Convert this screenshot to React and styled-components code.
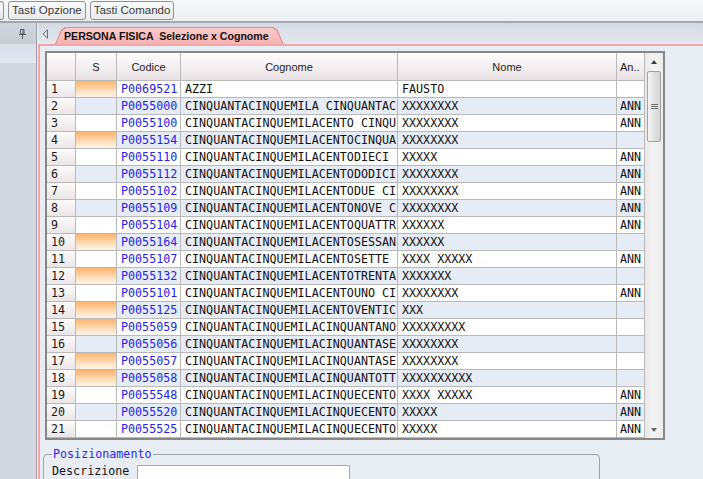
import React from 'react';
import styled, { createGlobalStyle } from 'styled-components';

const GlobalStyle = createGlobalStyle`
  html, body {
    margin: 0;
    padding: 0;
    width: 703px;
    height: 479px;
    overflow: hidden;
    background: #e8edf4;
  }
  body {
    font-family: "Liberation Sans", Arial, sans-serif;
  }
`;

const mono = `"DejaVu Sans Mono", "Liberation Mono", monospace`;

const Screen = styled.div`
  display: flex;
  flex-direction: column;
  width: 703px;
  height: 479px;
  overflow: hidden;
`;

const Toolbar = styled.div`
  flex: none;
  height: 20px;
  padding-top: 1px;
  display: flex;
  align-items: flex-start;
  gap: 4px;
  background: linear-gradient(#f8f9fb, #eceef2);
  border-bottom: 2px solid #a3a6ab;
`;

const ToolButton = styled.button`
  height: 19px;
  padding: 0 3px;
  border: 1px solid #8f9195;
  border-radius: 3px;
  background: linear-gradient(#fbfbfb, #e8e9eb);
  font-family: "Liberation Sans", Arial, sans-serif;
  font-size: 11.5px;
  color: #3a3a3a;
  line-height: 17px;
  white-space: nowrap;
`;

const ButtonStub = styled(ToolButton)`
  width: 4px;
  padding: 0;
  border-left: none;
  border-radius: 0 3px 3px 0;
`;

const Workspace = styled.div`
  flex: 1;
  display: flex;
  min-height: 0;
`;

const SidePanel = styled.div`
  flex: none;
  width: 36px;
  display: flex;
  flex-direction: column;
  background: #d3d7df;
  border-right: 1px solid #989ca4;
`;

const SideHeader = styled.div`
  height: 21px;
  display: flex;
  align-items: center;
  justify-content: flex-end;
  padding-right: 10px;
  background: linear-gradient(#d0d4dc, #c9ced6);
  border-bottom: 3px solid #dde0e6;
`;

const SideStrip = styled.div`
  height: 16px;
  background: linear-gradient(#d8e0eb, #e3e8f0);
`;

const Main = styled.div`
  flex: 1;
  min-width: 0;
  display: flex;
  flex-direction: column;
  border-left: 1px solid #eef0f4;
`;

const TabBar = styled.div`
  flex: none;
  height: 21px;
  display: flex;
  align-items: flex-end;
  padding-left: 4px;
  background: linear-gradient(#d5dae2, #e4e8ee);
`;

const TabArrow = styled.svg`
  align-self: center;
  margin: 1px 6px 0 0;
`;

const tabShape = `polygon(0 100%, 6px 3px, 10px 0, calc(100% - 10px) 0, calc(100% - 6px) 3px, 100% 100%)`;

const TabEdge = styled.div`
  padding: 1px 1px 0 1px;
  background: #dc8e8e;
  clip-path: ${tabShape};
`;

const TabFill = styled.div`
  height: 16px;
  padding: 0 14px 0 8px;
  background: linear-gradient(#fbcaca, #f7b2b2);
  clip-path: ${tabShape};
  font-size: 10.6px;
  font-weight: bold;
  line-height: 17px;
  color: #141414;
  white-space: pre;
`;

const Content = styled.div`
  flex: 1;
  min-height: 0;
  display: flex;
  flex-direction: column;
  align-items: flex-start;
  padding: 5px 0 0 5px;
  background: #e8edf4;
  border-top: 2px solid #f4a6a6;
  border-left: 2px solid #f4a6a6;
`;

const GridFrame = styled.div`
  flex: none;
  display: flex;
  border: 2px solid #878787;
  background: #fff;
`;

const GridTable = styled.div`
  display: grid;
  grid-template-columns: 29px 41px 64px 217px 219px 28px;
  grid-template-rows: 28px;
  grid-auto-rows: 17px;
`;

const CellBase = styled.div`
  box-sizing: border-box;
  border-right: 1px solid #b9b9b9;
  border-bottom: 1px solid #b9b9b9;
  overflow: hidden;
  white-space: nowrap;
`;

const HeadCell = styled(CellBase)`
  display: flex;
  align-items: center;
  justify-content: ${(p) => (p.$left ? 'flex-start' : 'center')};
  padding: 0 ${(p) => (p.$left ? '3px' : '4px')};
  background: linear-gradient(#fefcfc, #f3eef0 55%, #e8e2e4);
  font-size: 11px;
  color: #1e1e1e;
`;

const NumCell = styled(CellBase)`
  padding: 0 4px;
  background: linear-gradient(#fcfafa, #ebe6e7);
  font-family: ${mono};
  font-size: 11.7px;
  line-height: 16px;
  color: #1a1a1a;
`;

const Cell = styled(CellBase)`
  padding: 0 ${(p) => (p.$tight ? '2px 0 3px' : '4px')};
  background: ${(p) =>
    p.$sel
      ? 'linear-gradient(#fdb36a, #ffe4c8 70%, #fff3e8)'
      : p.$alt
      ? '#e6ecf5'
      : '#ffffff'};
  font-family: ${mono};
  font-size: 11.7px;
  line-height: 16px;
  color: ${(p) => (p.$blue ? '#2424e8' : '#101010')};
`;

const ScrollBar = styled.div`
  width: 18px;
  display: flex;
  flex-direction: column;
  align-items: center;
  background: linear-gradient(90deg, #e8e8e8, #f4f4f4 45%, #ececec);
`;

const ScrollButton = styled.div`
  flex: none;
  height: 17px;
  width: 100%;
  display: flex;
  align-items: center;
  justify-content: center;
`;

const ArrowUp = styled.span`
  width: 0;
  height: 0;
  border-left: 3.5px solid transparent;
  border-right: 3.5px solid transparent;
  border-bottom: 4px solid #3c3c3c;
`;

const ArrowDown = styled.span`
  width: 0;
  height: 0;
  border-left: 3.5px solid transparent;
  border-right: 3.5px solid transparent;
  border-top: 4px solid #666;
`;

const Thumb = styled.div`
  flex: none;
  box-sizing: border-box;
  width: 14px;
  height: 71px;
  margin-top: 1px;
  display: flex;
  align-items: center;
  justify-content: center;
  border: 1px solid #a3a3a3;
  border-radius: 2px;
  background: linear-gradient(90deg, #f4f4f4, #e3e3e3 50%, #d3d3d3);
`;

const Grip = styled.span`
  width: 7px;
  height: 5px;
  background: repeating-linear-gradient(#707070 0 1px, transparent 1px 2px);
`;

const Spacer = styled.div`
  flex: 1;
`;

const Fieldset = styled.fieldset`
  flex: none;
  box-sizing: border-box;
  width: 557px;
  margin: 7px 0 0 -2px;
  padding: 4px 8px 6px 8px;
  border: 1px solid #9ea3ab;
  border-radius: 4px;
`;

const Legend = styled.legend`
  padding: 0 1px;
  font-family: ${mono};
  font-size: 11.7px;
  color: #2b2bea;
`;

const FieldRow = styled.div`
  display: flex;
  align-items: flex-start;
  gap: 8px;
`;

const FieldLabel = styled.label`
  font-family: ${mono};
  font-size: 11.7px;
  line-height: 13px;
  color: #141414;
`;

const TextInput = styled.input`
  box-sizing: border-box;
  width: 213px;
  height: 19px;
  border: 1px solid #a4a8b0;
  background: #fff;
`;

const rows = [
  ['P0069521', 'AZZI', 'FAUSTO', true, false],
  ['P0055000', 'CINQUANTACINQUEMILA CINQUANTAC', 'XXXXXXXX', false, true],
  ['P0055100', 'CINQUANTACINQUEMILACENTO CINQU', 'XXXXXXXX', false, true],
  ['P0055154', 'CINQUANTACINQUEMILACENTOCINQUA', 'XXXXXXXX', true, false],
  ['P0055110', 'CINQUANTACINQUEMILACENTODIECI', 'XXXXX', false, true],
  ['P0055112', 'CINQUANTACINQUEMILACENTODODICI', 'XXXXXXXX', false, true],
  ['P0055102', 'CINQUANTACINQUEMILACENTODUE CI', 'XXXXXXXX', false, true],
  ['P0055109', 'CINQUANTACINQUEMILACENTONOVE C', 'XXXXXXXX', false, true],
  ['P0055104', 'CINQUANTACINQUEMILACENTOQUATTR', 'XXXXXX', false, true],
  ['P0055164', 'CINQUANTACINQUEMILACENTOSESSAN', 'XXXXXX', true, false],
  ['P0055107', 'CINQUANTACINQUEMILACENTOSETTE', 'XXXX XXXXX', false, true],
  ['P0055132', 'CINQUANTACINQUEMILACENTOTRENTA', 'XXXXXXX', true, false],
  ['P0055101', 'CINQUANTACINQUEMILACENTOUNO CI', 'XXXXXXXX', false, true],
  ['P0055125', 'CINQUANTACINQUEMILACENTOVENTIC', 'XXX', true, false],
  ['P0055059', 'CINQUANTACINQUEMILACINQUANTANO', 'XXXXXXXXX', true, false],
  ['P0055056', 'CINQUANTACINQUEMILACINQUANTASE', 'XXXXXXXX', false, false],
  ['P0055057', 'CINQUANTACINQUEMILACINQUANTASE', 'XXXXXXXX', true, false],
  ['P0055058', 'CINQUANTACINQUEMILACINQUANTOTT', 'XXXXXXXXXX', true, false],
  ['P0055548', 'CINQUANTACINQUEMILACINQUECENTO', 'XXXX XXXXX', false, true],
  ['P0055520', 'CINQUANTACINQUEMILACINQUECENTO', 'XXXXX', false, true],
  ['P0055525', 'CINQUANTACINQUEMILACINQUECENTO', 'XXXXX', false, true],
];

const PinIcon = () => (
  <svg width="7" height="10" viewBox="0 0 7 10">
    <path d="M1.5 0.5h3.5v4.5h-3.5z" fill="none" stroke="#555a62" />
    <path d="M4 1v4" stroke="#555a62" />
    <path d="M0 5.5h7" stroke="#555a62" />
    <path d="M3.5 6v4" stroke="#555a62" />
  </svg>
);

export default function App() {
  return (
    <Screen>
      <GlobalStyle />
      <Toolbar>
        <ButtonStub />
        <ToolButton>Tasti Opzione</ToolButton>
        <ToolButton>Tasti Comando</ToolButton>
      </Toolbar>
      <Workspace>
        <SidePanel>
          <SideHeader>
            <PinIcon />
          </SideHeader>
          <SideStrip />
        </SidePanel>
        <Main>
          <TabBar>
            <TabArrow width="7" height="10" viewBox="0 0 7 10">
              <path d="M5.5 0.8 L1 5 L5.5 9.2 Z" fill="none" stroke="#6c6f75" />
            </TabArrow>
            <TabEdge>
              <TabFill>{'PERSONA FISICA  Selezione x Cognome'}</TabFill>
            </TabEdge>
          </TabBar>
          <Content>
            <GridFrame>
              <GridTable>
                <HeadCell />
                <HeadCell>S</HeadCell>
                <HeadCell>Codice</HeadCell>
                <HeadCell>Cognome</HeadCell>
                <HeadCell>Nome</HeadCell>
                <HeadCell $left>An..</HeadCell>
                {rows.map(([code, surname, name, sel, ann], i) => {
                  const alt = i % 2 === 1;
                  return (
                    <React.Fragment key={code}>
                      <NumCell>{i + 1}</NumCell>
                      <Cell $alt={alt} $sel={sel} />
                      <Cell $alt={alt} $blue>{code}</Cell>
                      <Cell $alt={alt}>{surname}</Cell>
                      <Cell $alt={alt}>{name}</Cell>
                      <Cell $alt={alt} $tight>{ann ? 'ANN' : ''}</Cell>
                    </React.Fragment>
                  );
                })}
              </GridTable>
              <ScrollBar>
                <ScrollButton>
                  <ArrowUp />
                </ScrollButton>
                <Thumb>
                  <Grip />
                </Thumb>
                <Spacer />
                <ScrollButton>
                  <ArrowDown />
                </ScrollButton>
              </ScrollBar>
            </GridFrame>
            <Fieldset>
              <Legend>Posizionamento</Legend>
              <FieldRow>
                <FieldLabel>Descrizione</FieldLabel>
                <TextInput />
              </FieldRow>
            </Fieldset>
          </Content>
        </Main>
      </Workspace>
    </Screen>
  );
}
